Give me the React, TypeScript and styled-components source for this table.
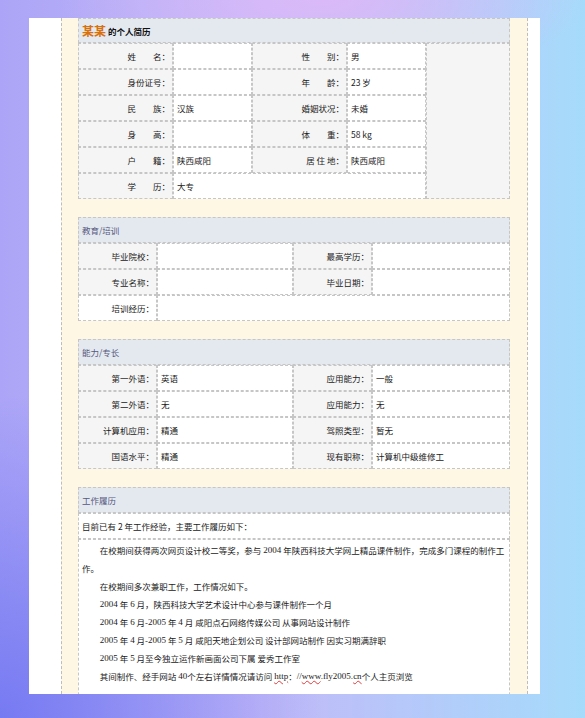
import React from 'react';
import styled, { createGlobalStyle } from 'styled-components';

const Global = createGlobalStyle`
  html, body { margin: 0; padding: 0; }
  body {
    width: 585px;
    height: 718px;
    overflow: hidden;
    font-family: "Noto Sans CJK SC", "Noto Sans", sans-serif;
  }
`;

const Page = styled.div`
  width: 585px;
  height: 718px;
  box-sizing: border-box;
  padding: 18px 45px 0 29px;
  background:
    radial-gradient(ellipse 45% 12% at 55% 0%, rgba(219, 185, 248, 1) 0%, rgba(219, 185, 248, 0) 100%),
    radial-gradient(ellipse 55% 45% at 0% 100%, rgba(118, 122, 242, 1) 0%, rgba(118, 122, 242, 0) 100%),
    linear-gradient(90deg, #aca5f7 0%, #c2b9f8 45%, #a6dbfb 100%);
`;

const Card = styled.div`
  width: 511px;
  height: 676px;
  box-sizing: border-box;
  background: #ffffff;
  overflow: hidden;
  padding: 0 12px 0 32px;
`;

const Frame = styled.div`
  height: 100%;
  box-sizing: border-box;
  border-left: 1px dashed #bdbdbd;
  border-right: 1px dashed #bdbdbd;
  background: #fdf7e4;
  padding: 0 17px 0 16px;
  display: flex;
  flex-direction: column;
  gap: 18px;
`;

const Section = styled.div`
  display: flex;
  flex-direction: column;
`;

const Header = styled.div<{ $h?: number }>`
  height: ${p => p.$h ?? 26}px;
  box-sizing: border-box;
  border: 1px dashed #c6c6c6;
  background: #e4e9f0;
  display: flex;
  align-items: center;
  padding-left: 3px;
  font-size: 8.5px;
  color: #55587e;
`;

const TitleName = styled.span`
  font-size: 12px;
  color: #d8700c;
  font-weight: bold;
  margin-right: 2px;
`;

const TitleRest = styled.span`
  font-size: 8.5px;
  color: #111;
  font-weight: bold;
`;

const Grid = styled.div<{ $cols: string }>`
  display: grid;
  grid-template-columns: ${p => p.$cols};
  grid-auto-rows: 26px;
`;

const Cell = styled.div<{
  $kind: 'label' | 'value' | 'plain';
  $span?: number;
  $rows?: number;
}>`
  box-sizing: border-box;
  border: 1px dashed #c6c6c6;
  display: flex;
  align-items: center;
  justify-content: ${p => (p.$kind === 'label' || p.$kind === 'plain' ? 'flex-end' : 'flex-start')};
  padding: ${p => (p.$kind === 'value' ? '0 0 0 3px' : '0 2px 0 0')};
  background: ${p => (p.$kind === 'label' ? '#f5f5f5' : '#ffffff')};
  font-size: 8.5px;
  color: #222;
  white-space: pre;
  grid-column: span ${p => p.$span ?? 1};
  grid-row: span ${p => p.$rows ?? 1};
`;

const Photo = styled.div<{ $rows: number }>`
  box-sizing: border-box;
  border: 1px dashed #c6c6c6;
  background: #f5f5f5;
  grid-row: span ${p => p.$rows};
`;

const Intro = styled.div`
  height: 26px;
  box-sizing: border-box;
  border: 1px dashed #c6c6c6;
  background: #fff;
  display: flex;
  align-items: center;
  padding-left: 3px;
  font-size: 8.5px;
  color: #222;
`;

const Body = styled.div`
  box-sizing: border-box;
  border: 1px dashed #c6c6c6;
  border-bottom: none;
  background: #fff;
  padding: 1px 3px 40px 3px;
  font-size: 8.5px;
  color: #222;
  line-height: 18px;
`;

const Para = styled.p`
  margin: 0;
  text-indent: 2.1em;
`;

const Latin = styled.span`
  font-family: "Liberation Serif", "Noto Sans CJK SC", serif;
  font-size: 9px;
  line-height: 18px;
  vertical-align: top;
`;

const Squiggle = styled.span`
  text-decoration: underline wavy #e23b3b;
  text-decoration-thickness: 1px;
  text-underline-offset: 1px;
`;

const s1 = [
  ['姓　　名：', '', '性　　别：', '男'],
  ['身份证号：', '', '年　　龄：', '23 岁'],
  ['民　　族：', '汉族', '婚姻状况：', '未婚'],
  ['身　　高：', '', '体　　重：', '58 kg'],
  ['户　　籍：', '陕西咸阳', '居 住 地：', '陕西咸阳'],
];

const s3 = [
  ['第一外语：', '英语', '应用能力：', '一般'],
  ['第二外语：', '无', '应用能力：', '无'],
  ['计算机应用：', '精通', '驾照类型：', '暂无'],
  ['国语水平：', '精通', '现有职称：', '计算机中级维修工'],
];

export default function App() {
  return (
    <>
      <Global />
      <Page>
        <Card>
          <Frame>
            <Section>
              <Header $h={25}>
                <TitleName>某某</TitleName>
                <TitleRest>的个人简历</TitleRest>
              </Header>
              <Grid $cols="95px 79px 95px 79px 84px">
                {s1.map((r, i) => (
                  <React.Fragment key={i}>
                    <Cell $kind="label">{r[0]}</Cell>
                    <Cell $kind="value">{r[1]}</Cell>
                    <Cell $kind="label">{r[2]}</Cell>
                    <Cell $kind="value">{r[3]}</Cell>
                    {i === 0 && <Photo $rows={6} />}
                  </React.Fragment>
                ))}
                <Cell $kind="label">学　　历：</Cell>
                <Cell $kind="value" $span={3}>大专</Cell>
              </Grid>
            </Section>

            <Section>
              <Header>教育/培训</Header>
              <Grid $cols="79px 136px 79px 138px">
                <Cell $kind="label">毕业院校：</Cell>
                <Cell $kind="value" />
                <Cell $kind="label">最高学历：</Cell>
                <Cell $kind="value" />
                <Cell $kind="label">专业名称：</Cell>
                <Cell $kind="value" />
                <Cell $kind="label">毕业日期：</Cell>
                <Cell $kind="value" />
                <Cell $kind="plain">培训经历：</Cell>
                <Cell $kind="value" $span={3} />
              </Grid>
            </Section>

            <Section>
              <Header>能力/专长</Header>
              <Grid $cols="79px 136px 79px 138px">
                {s3.map((r, i) => (
                  <React.Fragment key={i}>
                    <Cell $kind="label">{r[0]}</Cell>
                    <Cell $kind="value">{r[1]}</Cell>
                    <Cell $kind="label">{r[2]}</Cell>
                    <Cell $kind="value">{r[3]}</Cell>
                  </React.Fragment>
                ))}
              </Grid>
            </Section>

            <Section>
              <Header>工作履历</Header>
              <Intro>目前已有 2 年工作经验，主要工作履历如下：</Intro>
              <Body>
                <Para>
                  在校期间获得两次网页设计校二等奖，参与 <Latin>2004</Latin> 年陕西科技大学网上精品课件制作，完成多门课程的制作工作。
                </Para>
                <Para>在校期间多次兼职工作，工作情况如下。</Para>
                <Para>
                  <Latin>2004</Latin> 年 <Latin>6</Latin> 月，陕西科技大学艺术设计中心参与课件制作一个月
                </Para>
                <Para>
                  <Latin>2004</Latin> 年 <Latin>6</Latin> 月-<Latin>2005</Latin> 年 <Latin>4</Latin> 月 咸阳点石网络传媒公司 从事网站设计制作
                </Para>
                <Para>
                  <Latin>2005</Latin> 年 <Latin>4</Latin> 月-<Latin>2005</Latin> 年 <Latin>5</Latin> 月 咸阳天地企划公司 设计部网站制作 因实习期满辞职
                </Para>
                <Para>
                  <Latin>2005</Latin> 年 <Latin>5</Latin> 月至今独立运作新画面公司下属 爱秀工作室
                </Para>
                <Para>
                  其间制作、经手网站 <Latin>40</Latin>个左右详情情况请访问 <Latin><Squiggle>http</Squiggle></Latin>：<Latin>//<Squiggle>www</Squiggle>.fly2005.<Squiggle>cn</Squiggle></Latin>个人主页浏览
                </Para>
              </Body>
            </Section>
          </Frame>
        </Card>
      </Page>
    </>
  );
}
